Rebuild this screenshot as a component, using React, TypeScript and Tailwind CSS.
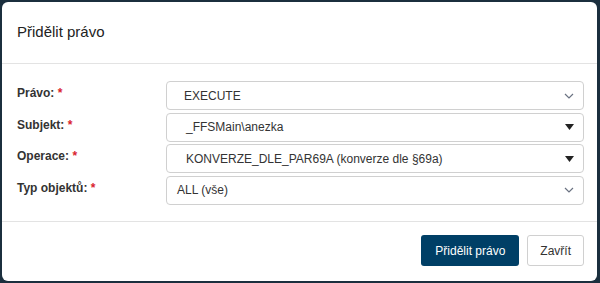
import React from "react";

const font = { fontFamily: '"Liberation Sans", Arial, sans-serif' };

function Chevron() {
  return (
    <svg width="10" height="6" viewBox="0 0 10 6" className="text-gray-500">
      <path d="M1 1l4 4 4-4" fill="none" stroke="currentColor" strokeWidth="1.2" />
    </svg>
  );
}

function Caret() {
  return (
    <svg width="9" height="6" viewBox="0 0 9 6">
      <path d="M0 0h9L4.5 6z" fill="#222" />
    </svg>
  );
}

type Row = { label: string; value: string; kind: "chevron" | "caret"; pad: string };

const rows: Row[] = [
  { label: "Právo:", value: "EXECUTE", kind: "chevron", pad: "pl-[17px]" },
  { label: "Subjekt:", value: "_FFSMain\\anezka", kind: "caret", pad: "pl-[19px]" },
  { label: "Operace:", value: "KONVERZE_DLE_PAR69A (konverze dle §69a)", kind: "caret", pad: "pl-[19px]" },
  { label: "Typ objektů:", value: "ALL (vše)", kind: "chevron", pad: "pl-[10px]" },
];

export default function App() {
  return (
    <div className="w-[600px] h-[283px] bg-[#1b2f3e] pt-[2px] pl-[2px] pr-[3px] pb-[2px]" style={font}>
      <div className="h-full bg-white rounded-[6px] flex flex-col">
        {/* Header */}
        <div className="h-[62px] border-b border-[#e3e3e3] flex items-center pl-[15px]">
          <h1 className="text-[15px] text-[#222]">Přidělit právo</h1>
        </div>

        {/* Body */}
        <div className="flex flex-col gap-[2.5px] pt-[17px] pb-[16px] pl-[15px] pr-[13px] border-b border-[#e3e3e3]">
          {rows.map((r) => (
            <div key={r.label} className="flex">
              <label className="w-[149px] shrink-0 pt-[3px] text-[12px] font-bold text-[#333]">
                {r.label} <span className="text-[#d9232e]">*</span>
              </label>
              <div
                className={`flex-1 h-[29px] flex items-center justify-between border border-[#d0d0d0] rounded-[4px] ${r.pad} pr-[9px] text-[12px] text-[#333]`}
              >
                <span>{r.value}</span>
                {r.kind === "chevron" ? <Chevron /> : <Caret />}
              </div>
            </div>
          ))}
        </div>

        {/* Footer */}
        <div className="flex-1 flex items-center justify-end gap-[8px] pr-[13px] pb-[1px]">
          <button className="h-[31px] px-[14px] rounded-[3px] bg-[#003f66] text-white text-[12px]">
            Přidělit právo
          </button>
          <button className="h-[31px] px-[12px] rounded-[3px] border border-[#d0d0d0] bg-white text-[#333] text-[12px]">
            Zavřít
          </button>
        </div>
      </div>
    </div>
  );
}
